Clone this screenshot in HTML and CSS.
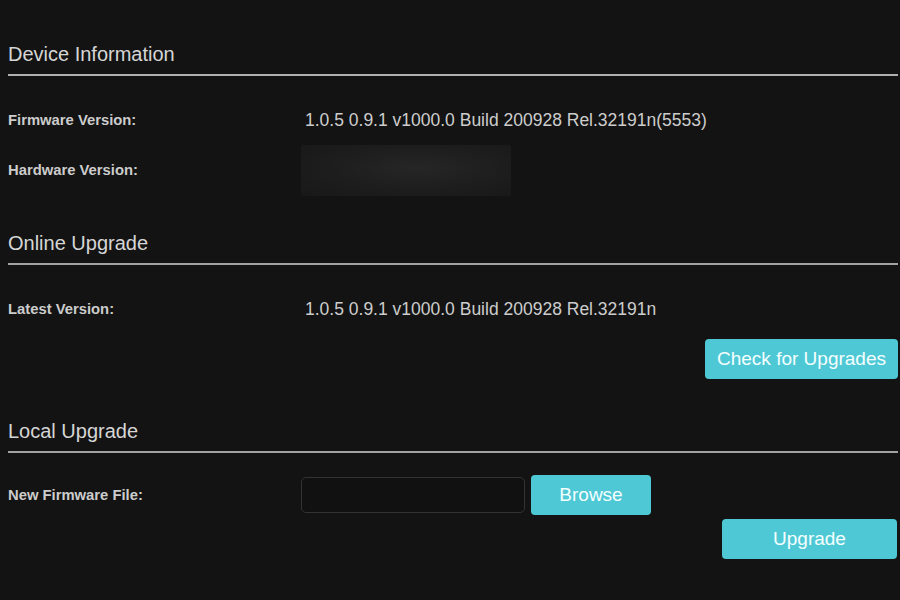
FILE: index.html
```html
<!DOCTYPE html>
<html>
<head>
<meta charset="utf-8">
<link rel="stylesheet" href="styles.css">
</head>
<body>
<div class="page">
  <section class="sec sec-first">
    <h2 class="sec-title">Device Information</h2>
    <div class="row">
      <div class="label">Firmware Version:</div>
      <div class="value">1.0.5 0.9.1 v1000.0 Build 200928 Rel.32191n(5553)</div>
    </div>
    <div class="row row-hw">
      <div class="label">Hardware Version:</div>
      <div class="blur"></div>
    </div>
  </section>
  <section class="sec">
    <h2 class="sec-title">Online Upgrade</h2>
    <div class="row">
      <div class="label">Latest Version:</div>
      <div class="value">1.0.5 0.9.1 v1000.0 Build 200928 Rel.32191n</div>
    </div>
    <div class="actions">
      <button class="btn btn-check">Check for Upgrades</button>
    </div>
  </section>
  <section class="sec">
    <h2 class="sec-title">Local Upgrade</h2>
    <div class="row row-file">
      <div class="label">New Firmware File:</div>
      <div class="file-input"></div>
      <button class="btn btn-browse">Browse</button>
    </div>
    <div class="actions actions-upgrade">
      <button class="btn btn-upgrade">Upgrade</button>
    </div>
  </section>
</div>
</body>
</html>
```
FILE: styles.css
```css
html, body {
  margin: 0;
  padding: 0;
  background: #131313;
  height: 100%;
}
body {
  font-family: "Liberation Sans", Arial, sans-serif;
  color: #d2d2d2;
}
.page {
  padding: 42px 2px 0 8px;
}
.sec-title {
  margin: 0;
  font-weight: normal;
  font-size: 20px;
  line-height: 24px;
  color: #d6d6d6;
  padding-bottom: 8px;
  border-bottom: 2px solid #a2a2a2;
}
.sec-first .sec-title {
  border-bottom-color: #b0b0b0;
}
.row {
  display: flex;
  align-items: center;
  height: 48px;
  margin-top: 20px;
}
.row + .row {
  margin-top: 0;
}
.row-hw {
  height: 52px;
  margin-bottom: 35px;
}
.label {
  width: 293px;
  flex: none;
  font-size: 14.8px;
  font-weight: bold;
  color: #cccccc;
}
.value {
  padding-left: 4px;
  font-size: 17.5px;
  color: #cdcdcd;
}
.blur {
  width: 210px;
  height: 51px;
  background: radial-gradient(ellipse at 55% 45%, #262626 0%, #1d1d1d 55%, #181818 100%);
  border-radius: 2px;
}
.actions {
  display: flex;
  justify-content: flex-end;
  margin-top: 6px;
  margin-bottom: 40px;
}
.btn {
  font-family: "Liberation Sans", Arial, sans-serif;
  background: #4fc8d5;
  color: #f4ffff;
  border: none;
  border-radius: 4px;
  font-size: 19px;
  padding: 0;
  cursor: pointer;
}
.btn-check {
  width: 193px;
  height: 40px;
}
.row-file {
  height: 40px;
  margin-top: 22px;
}
.file-input {
  width: 222px;
  height: 34px;
  border: 1px solid #333;
  border-radius: 5px;
  background: #111;
}
.btn-browse {
  margin-left: 6px;
  width: 120px;
  height: 40px;
}
.actions-upgrade {
  margin-top: 4px;
  margin-right: 1px;
}
.btn-upgrade {
  width: 175px;
  height: 40px;
}
```
